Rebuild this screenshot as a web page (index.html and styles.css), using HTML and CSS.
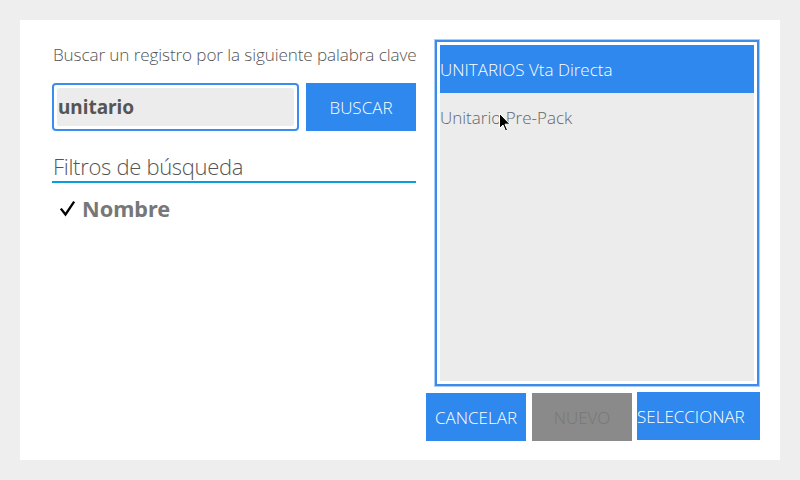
FILE: index.html
```html
<!DOCTYPE html>
<html lang="es">
<head>
<meta charset="utf-8">
<link rel="stylesheet" href="styles.css">
</head>
<body>
<div class="panel">
  <div class="left">
    <div class="label">Buscar un registro por la siguiente palabra clave</div>
    <div class="search-row">
      <div class="input"><div class="input-inner">unitario</div></div>
      <div class="btn buscar">BUSCAR</div>
    </div>
    <div class="filters-title">Filtros de búsqueda</div>
    <div class="filter">
      <svg class="check" width="22" height="20" viewBox="0 0 22 20"><path d="M2.5 10.5 L6.5 15.5 L14.5 3.5" fill="none" stroke="#000" stroke-width="2.3" stroke-linecap="square" stroke-linejoin="miter"/></svg>
      <span class="filter-name">Nombre</span>
    </div>
  </div>
  <div class="right">
    <div class="listbox">
      <div class="list-inner">
        <div class="item selected">UNITARIOS Vta Directa</div>
        <div class="item">Unitario Pre-Pack</div>
        <svg class="cursor" width="12" height="19" viewBox="0 0 12 19"><path d="M0.5 0.5 L0.5 15.5 L4 12 L6.5 18 L8.5 17 L6 11.2 L11 11.2 Z" fill="#000" stroke="#fff" stroke-width="1"/></svg>
      </div>
    </div>
    <div class="actions">
      <div class="btn cancel">CANCELAR</div>
      <div class="btn nuevo">NUEVO</div>
      <div class="btn select">SELECCIONAR</div>
    </div>
  </div>
</div>
</body>
</html>
```
FILE: styles.css
```css
html, body {
  margin: 0;
  padding: 0;
}
body {
  background: #eeeeee;
  width: 800px;
  height: 480px;
  overflow: hidden;
  font-family: "Open Sans", "Liberation Sans", sans-serif;
}
.panel {
  margin: 20px;
  width: 760px;
  height: 440px;
  background: #ffffff;
  display: flex;
  box-sizing: border-box;
  padding: 19px 20px 0 32px;
}
.left {
  width: 364px;
  display: flex;
  flex-direction: column;
}
.label {
  font-weight: 300;
  font-size: 17.1px;
  color: #555;
  line-height: 22px;
  margin-top: 5px;
  letter-spacing: -0.1px;
  white-space: nowrap;
  padding-left: 1px;
}
.search-row {
  display: flex;
  margin-top: 17px;
  gap: 7px;
}
.input {
  width: 247px;
  height: 48px;
  box-sizing: border-box;
  border: 2px solid #3a8ef0;
  border-radius: 4px;
  padding: 3px;
  background: #fff;
}
.input-inner {
  height: 100%;
  background: #ebeceb;
  border-radius: 3px;
  font-family: "Noto Sans", "Open Sans", sans-serif;
  font-weight: 700;
  font-size: 19px;
  color: #555;
  line-height: 38px;
  padding-left: 1px;
}
.btn {
  display: flex;
  align-items: center;
  justify-content: center;
  height: 48px;
  background: #2e88ee;
  color: #fff;
  font-weight: 300;
  font-size: 17px;
  white-space: nowrap;
}
.buscar {
  width: 110px;
}
.filters-title {
  margin-top: 20px;
  font-weight: 300;
  font-size: 22px;
  color: #555;
  line-height: 30px;
  padding-left: 1px;
  border-bottom: 2px solid #08a0dc;
  letter-spacing: -0.3px;
}
.filter {
  display: flex;
  align-items: center;
  margin-top: 11px;
  padding-left: 7px;
}
.check {
  display: block;
  margin-right: 1px;
}
.filter-name {
  font-family: "Noto Sans", "Open Sans", sans-serif;
  font-weight: 700;
  font-size: 21.7px;
  color: #777;
}
.right {
  margin-left: 18px;
  width: 326px;
  display: flex;
  flex-direction: column;
}
.listbox {
  height: 346px;
  box-sizing: border-box;
  border: 2px solid #3d8ceb;
  box-shadow: 0 0 0 1px #a9cdf5;
  margin: 1px 1px 0 1px;
  padding: 3px;
  background: #fff;
}
.list-inner {
  position: relative;
  height: 100%;
  background: #ebeceb;
}
.item {
  height: 48px;
  display: flex;
  align-items: center;
  font-weight: 300;
  font-size: 17px;
  color: #666;
  white-space: nowrap;
}
.item.selected {
  background: #2e88ee;
  color: #fff;
}
.cursor {
  position: absolute;
  left: 59px;
  top: 68px;
}
.actions {
  display: flex;
  margin-left: -8px;
  margin-top: 7px;
  align-items: flex-start;
}
.cancel {
  width: 100px;
}
.nuevo {
  width: 100px;
  margin-left: 6px;
  background: #8a8a8a;
  color: #777;
}
.select {
  width: 123px;
  margin-left: 5px;
  margin-top: -1px;
  justify-content: flex-start;
}
```
